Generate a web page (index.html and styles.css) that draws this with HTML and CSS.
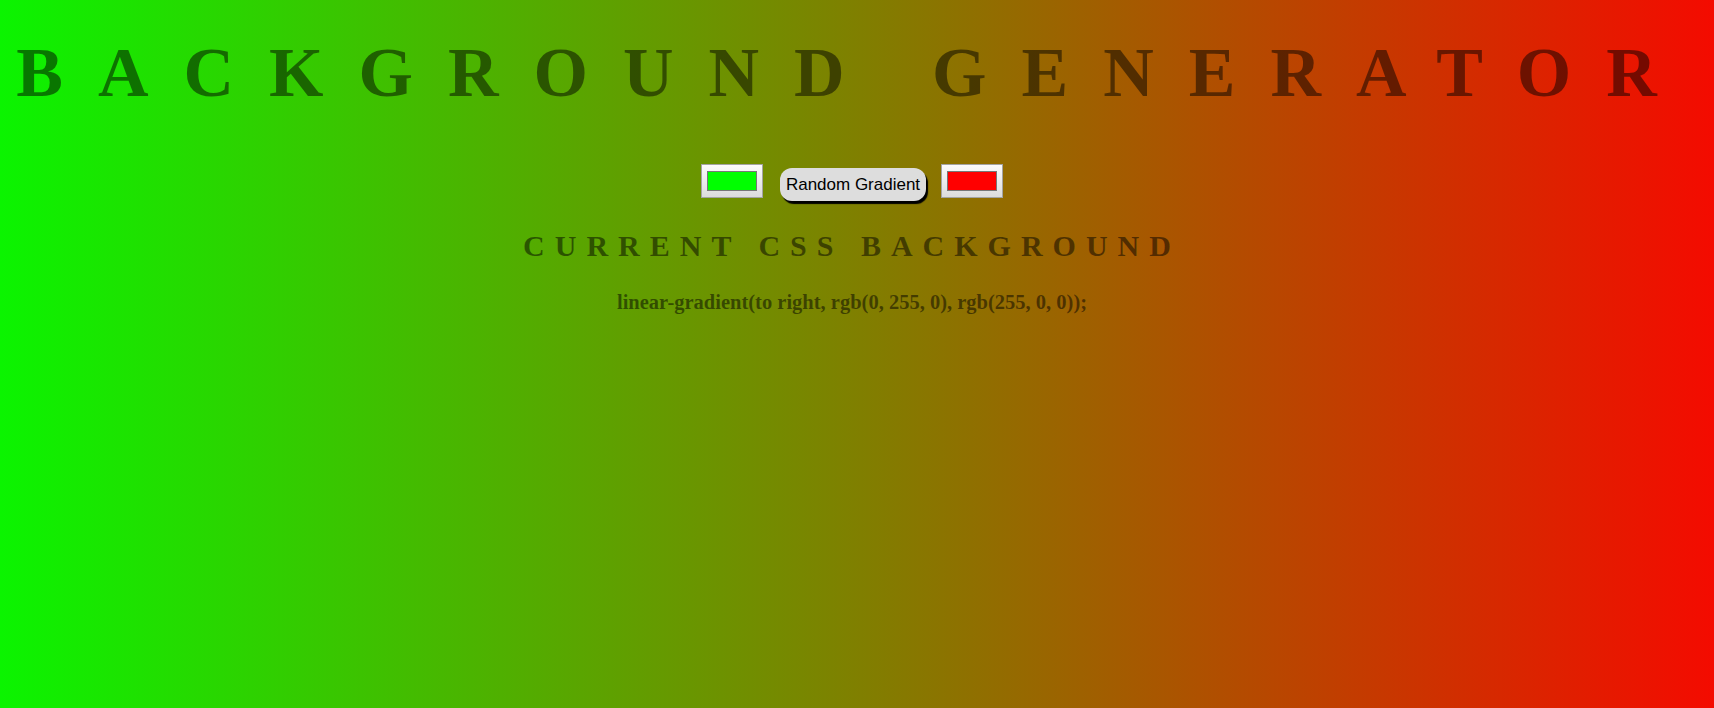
FILE: index.html
```html
<!DOCTYPE html>
<html lang="en">
<head>
<meta charset="utf-8">
<title>Background Generator</title>
<link rel="stylesheet" href="styles.css">
</head>
<body class="page">
  <h1 class="title">Background Generator</h1>
  <div class="controls">
    <label class="picker"><span class="swatch swatch-green"></span></label>
    <button class="random-btn" type="button">Random Gradient</button>
    <label class="picker"><span class="swatch swatch-red"></span></label>
  </div>
  <h3 class="subtitle">Current CSS Background</h3>
  <p class="css-output">linear-gradient(to right, rgb(0, 255, 0), rgb(255, 0, 0));</p>
</body>
</html>
```
FILE: styles.css
```css
html {
  height: 100%;
}

.page {
  margin: 0;
  padding: 0 10px 0 0;
  min-height: 100%;
  background-color: #808000;
  background-image: linear-gradient(to right, rgb(0, 255, 0), rgb(255, 0, 0));
  background-size: calc(100% + 160px) 100%;
  background-position: -80px 0;
  background-repeat: repeat-y;
  color: rgba(0, 0, 0, 0.5);
  text-align: center;
  text-transform: uppercase;
  font-family: "Liberation Serif", "Times New Roman", serif;
}

.title {
  margin: 33px 0 0 4px;
  font-size: 70px;
  font-weight: 700;
  letter-spacing: 35px;
  line-height: normal;
  white-space: nowrap;
}

.controls {
  display: flex;
  justify-content: center;
  align-items: flex-start;
  margin-top: 51px;
}

.picker {
  display: flex;
  align-items: center;
  justify-content: center;
  box-sizing: border-box;
  width: 62px;
  height: 34px;
  border: 1px solid #a4a4a4;
  background: linear-gradient(#fbfbfb, #dcdcdc);
}

.swatch {
  display: block;
  box-sizing: border-box;
  width: 50px;
  height: 20px;
  border: 1px solid #777;
}

.swatch-green {
  background: #00ff00;
}

.swatch-red {
  background: #ff0000;
}

.random-btn {
  margin: 4px 15px 0 17px;
  height: 33px;
  padding: 0 6px;
  border: none;
  border-radius: 12px;
  background: #dddddd;
  box-shadow: 2px 3px 1px #000;
  color: #000;
  font-family: "Liberation Sans", Arial, sans-serif;
  font-size: 17px;
  text-transform: none;
  letter-spacing: 0;
}

.subtitle {
  margin: 28px 0 0;
  font-size: 30px;
  font-weight: 700;
  letter-spacing: 10px;
  line-height: normal;
}

.css-output {
  margin: 28px 0 0;
  font-size: 20.5px;
  font-weight: 700;
  line-height: normal;
  text-transform: none;
}
```
